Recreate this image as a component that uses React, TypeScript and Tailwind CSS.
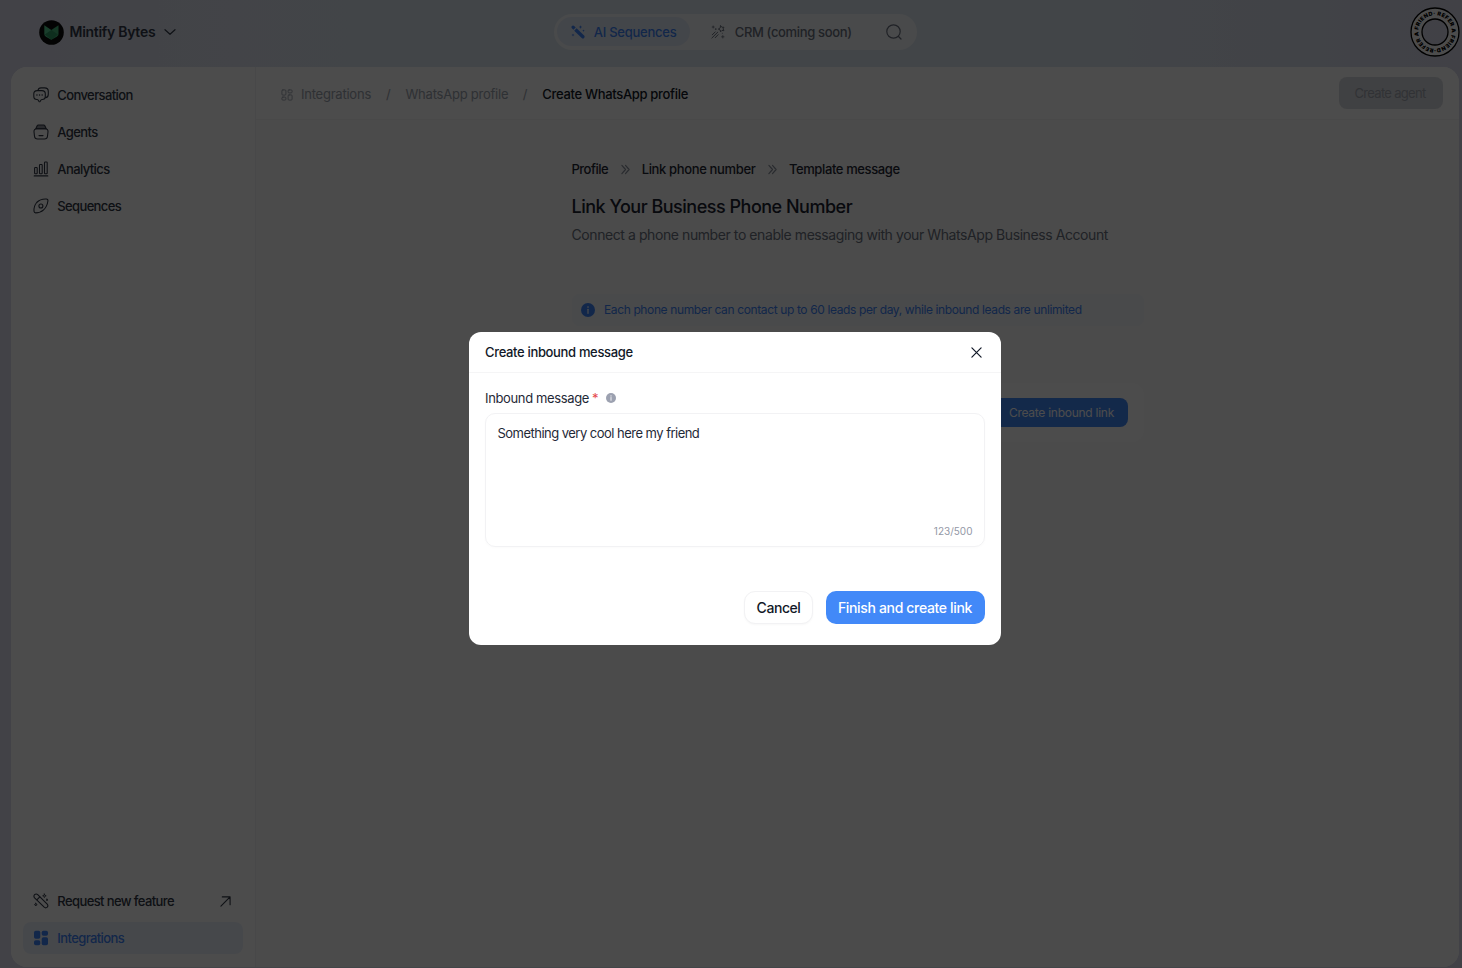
import type { ReactNode } from "react";

type IconProps = { className?: string };

function Svg({ className, box = 16, width = 1.1, children }: IconProps & { box?: number; width?: number; children: ReactNode }) {
  return (
    <svg viewBox={`0 0 ${box} ${box}`} className={className} fill="none" stroke="currentColor" strokeWidth={width} strokeLinecap="round" strokeLinejoin="round">
      {children}
    </svg>
  );
}

const ChatIcon = () => (
  <Svg className="size-4 shrink-0">
    <path d="M5 3.400C5.200 1.700 6.300.9 8 .9h3.600c2.400 0 3.700 1.200 3.700 3.600v2.700c0 2.200-1 3.400-2.900 3.600" />
    <path d="M4.200 3.600h4.700c2.300 0 3.400 1.100 3.400 3.200v2.400c0 2.100-1.100 3.300-3.200 3.300-.5 0-.8.100-1.100.500l-.8 1.300c-.4.500-.9.500-1.300 0L5.100 13c-.3-.4-.6-.5-1.100-.5C1.800 12.500.8 11.400.8 9.200V6.800C.8 4.700 1.900 3.600 4.200 3.600Z" />
    <path d="M3.900 8h.1M6.500 8h.1M9.100 8h.1" strokeWidth="1.400" />
  </Svg>
);

const AgentsIcon = () => (
  <Svg className="size-4 shrink-0">
    <path d="M3.800 4.800h8.400c2 0 3 1.100 2.800 3l-.5 4.400c-.2 1.900-1 2.800-3 2.800h-7c-2 0-2.800-.9-3-2.800L1 7.800c-.2-1.900.800-3 2.800-3Z" />
    <path d="M2.800 4.800 4.300 1.600c.2-.4.500-.6.900-.6h5.600c.4 0 .7.200.9.600l1.500 3.200Z" fill="currentColor" fillOpacity=".55" />
    <path d="M6 11.600h4" />
  </Svg>
);

const AnalyticsIcon = () => (
  <Svg className="size-4 shrink-0">
    <path d="M1.200 14.900h13.600" />
    <rect x="1.600" y="6.500" width="2.600" height="6.300" rx=".7" />
    <rect x="6.500" y="3.500" width="2.700" height="9.300" rx=".7" />
    <rect x="11.500" y="1" width="2.700" height="11.800" rx=".7" />
  </Svg>
);

const SequencesIcon = () => (
  <Svg className="size-4 shrink-0">
    <path d="M1 13.300c-.2-3.400.5-6.400 2.700-8.800C6.100 2 9.700.8 13.400 1c1.200.1 1.700.8 1.500 2-.5 3.500-1.800 6.600-4.300 8.900-2.200 2-4.800 3-8 3C1.600 14.900 1.100 14.300 1 13.300Z" />
    <circle cx="7.900" cy="8" r="2" />
  </Svg>
);

const RequestIcon = () => (
  <Svg className="size-4 shrink-0">
    <path d="M1.600 1.700c.9-.9 2.200-.9 3.100 0l9.500 9.500c.8.900.8 2.100 0 3-.9.800-2.100.800-3 0L1.600 4.800c-.8-.9-.8-2.200 0-3.100Z" />
    <path d="m6.800 3.900-2.700 2.700" />
    <path d="m11.400 1 .5 1.300 1.300.5-1.300.5-.5 1.300-.5-1.300-1.300-.5 1.300-.5ZM14 6.100l.2.600.6.200-.6.200-.2.600-.2-.6-.6-.2.600-.2ZM2.800 10.200l.4 1 1 .4-1 .4-.4 1-.4-1-1-.4 1-.4Z" strokeWidth=".8" />
  </Svg>
);

const GridIcon = () => (
  <svg viewBox="0 0 16 16" className="size-4 shrink-0" fill="currentColor">
    <rect x="1" y=".8" width="6.300" height="8" rx="1.700" />
    <rect x="8.700" y=".8" width="6.300" height="5" rx="1.700" />
    <rect x="1" y="10.200" width="6.300" height="5" rx="1.700" />
    <rect x="8.700" y="7.200" width="6.300" height="8" rx="1.700" />
  </svg>
);

const GridOutlineIcon = () => (
  <Svg className="size-3 shrink-0" box={12} width={0.9}>
    <rect x=".9" y=".9" width="4" height="5.200" rx="1" />
    <rect x="7.100" y=".9" width="4" height="3" rx="1" />
    <rect x=".9" y="8.100" width="4" height="3" rx="1" />
    <rect x="7.100" y="5.900" width="4" height="5.200" rx="1" />
  </Svg>
);

const WandIcon = () => (
  <svg viewBox="0 0 14 14" className="size-3.5 shrink-0" fill="currentColor">
    <path d="M3.200 5.700 5.600 3.300l7.500 7.300c.7.700.7 1.700 0 2.400s-1.700.7-2.400 0Z" />
    <path d="M.9.900c.7-.7 1.700-.7 2.300 0l1.500 1.600-2.300 2.300L.9 3.200C.3 2.600.3 1.600.9.900Z" />
    <path d="m9.500.3.500 1.300 1.300.5-1.300.5-.5 1.300L9 2.600l-1.300-.5L9 1.600ZM12.500 4.400l.4.900.9.400-.9.400-.4.900-.4-.9-.9-.4.900-.4ZM2 8.500l.4 1.100 1.100.4-1.100.4L2 11.500l-.4-1.100L.5 10l1.100-.4Z" />
  </svg>
);

const StarWandIcon = () => (
  <Svg className="size-3.5 shrink-0" box={14} width={1}>
    <path d="m9.700.8 1.200 1.500 2-.1-.8 1.700.8 1.800-1.900-.3L9.600 6.800 9.200 5 7.300 4.100 9 3Z" />
    <path d="M6.700 7.200.9 13M4.200 6.900 1.300 9.800M7.100 9.700l-2.900 3" />
    <path d="M2.200 1v2M1.200 2h2M4.700 3.700v.9M4.300 4.100h.9M11.800 10.600v2.400M10.600 11.800H13M11.300 8.300h.1" strokeWidth=".8" />
  </Svg>
);

function ReferBadge() {
  return (
    <svg viewBox="0 0 50 50" className="size-[50px] shrink-0">
      <defs>
        <path id="badge-ring" d="M25 8.300a16.700 16.700 0 0 1 0 33.400a16.700 16.700 0 0 1 0-33.400" />
      </defs>
      <circle cx="25" cy="25" r="18.700" fill="none" stroke="#fff" strokeWidth="11" />
      <circle cx="25" cy="25" r="24" fill="none" stroke="#000" strokeWidth="1.300" />
      <circle cx="25" cy="25" r="13" fill="none" stroke="#000" strokeWidth="1.300" />
      <text className="font-['Inter'] text-[5.500px] font-black" fill="#000">
        <textPath href="#badge-ring" startOffset="2" textLength="102.500" lengthAdjust="spacing">
          REFER A FRIEND·REFER A FRIEND·
        </textPath>
      </text>
    </svg>
  );
}

function InfoIcon({ className }: IconProps) {
  return (
    <svg viewBox="0 0 14 14" className={className}>
      <circle cx="7" cy="7" r="7" fill="currentColor" />
      <path d="M7 6.300v4" stroke="#fff" strokeWidth="1.200" strokeLinecap="round" />
      <circle cx="7" cy="4.100" r=".8" fill="#fff" />
    </svg>
  );
}

const Chevrons = () => (
  <Svg className="mb-px h-[11px] w-[9px] shrink-0 text-[#8b919d]" box={10} width={1.300}>
    <path d="m1 .5 4 4.500-4 4.500M5 .5 9 5 5 9.500" />
  </Svg>
);

const nav = [
  { label: "Conversation", icon: <ChatIcon />, tracking: "tracking-[-0.600px]" },
  { label: "Agents", icon: <AgentsIcon />, tracking: "tracking-[-0.600px]" },
  { label: "Analytics", icon: <AnalyticsIcon />, tracking: "tracking-[-0.600px]" },
  { label: "Sequences", icon: <SequencesIcon />, tracking: "tracking-[-0.640px]" },
];

function Header() {
  return (
    <header className="flex h-[67px] shrink-0 items-start pl-[39px]">
      <div className="flex h-16 w-[514.700px] items-center">
        <svg viewBox="0 0 25 25" className="size-[25px]">
          <circle cx="12.500" cy="12.500" r="12.300" fill="#0d0d0d" />
          <path d="M5.300 5.300 12.300 10v9.800l-5.300-3.100c-1.100-.7-1.700-1.600-1.700-2.900Z" fill="#58d193" />
          <path d="M19.500 5.300 12.300 10v9.800l5.500-3.100c1.100-.7 1.700-1.600 1.700-2.900Z" fill="#46b77c" />
          <path d="m5.800 14.500 6.500-4.500 6.700 4.500-6.700 5.300Z" fill="#2f9a64" />
        </svg>
        <span className="ml-[5.500px] text-sm font-semibold tracking-[-0.280px] text-[#333b4a]">Mintify Bytes</span>
        <Svg className="ml-[9px] h-3 w-3 text-[#333b4a]" box={12} width={1.200}>
          <path d="m1 3.700 5 4.600 5-4.600" />
        </Svg>
      </div>
      <nav className="mt-3.5 flex h-[35.500px] w-[363px] items-center rounded-full bg-white/70 pl-[3px] text-[13px] font-medium text-[#6b7280]">
        <div className="flex h-[29px] w-[133px] items-center rounded-full bg-[#e2eaf7] pl-3.5 text-[#3f84f7]">
          <WandIcon />
          <span className="ml-[9px] pt-px whitespace-nowrap tracking-[-0.240px]">AI Sequences</span>
        </div>
        <div className="ml-[21px] flex items-center">
          <StarWandIcon />
          <span className="ml-[10px] pt-px whitespace-nowrap tracking-[-0.340px]">CRM (coming soon)</span>
        </div>
        <Svg className="ml-[34px] size-4" width={1.200}>
          <circle cx="7.500" cy="7.500" r="6.700" />
          <path d="m12.500 12.500 2.500 2.500" />
        </Svg>
      </nav>
      <div className="flex flex-1 justify-end pt-[7px] pr-0.5">
        <ReferBadge />
      </div>
    </header>
  );
}

function Sidebar() {
  return (
    <aside className="flex w-[245px] shrink-0 flex-col justify-between border-r border-[#f2f2f4] bg-white px-3 pt-3 pb-[13px] text-[13px] font-medium text-[#303745]">
      <ul className="flex flex-col gap-[5px]">
        {nav.map((item) => (
          <li key={item.label} className="flex h-8 items-center gap-[8.300px] pl-2.5">
            {item.icon}
            <span className={`pt-0.5 ${item.tracking}`}>{item.label}</span>
          </li>
        ))}
      </ul>
      <ul className="flex flex-col gap-[5px]">
        <li className="flex h-8 items-center gap-[8.300px] pr-3 pl-2.5">
          <RequestIcon />
          <span className="flex-1 pt-0.5 tracking-[-0.600px]">Request new feature</span>
          <Svg className="size-[11px]" box={12} width={1.200}>
            <path d="M1 11 11 1M2.500 1H11v8.500" />
          </Svg>
        </li>
        <li className="flex h-8 items-center gap-[8.300px] rounded-lg bg-[#ecf1fb] pl-2.5 text-[#3f84f7]">
          <GridIcon />
          <span className="pt-0.5 tracking-[-0.600px]">Integrations</span>
        </li>
      </ul>
    </aside>
  );
}

function Toolbar() {
  return (
    <div className="flex h-[53px] items-center justify-between border-b border-[#f4f4f6] bg-[#fdfdfd] pr-4 pl-[25px] text-[13px] text-[#9ca3af]">
      <div className="flex items-center pt-[3px]">
        <GridOutlineIcon />
        <span className="ml-2 tracking-[-0.230px]">Integrations</span>
        <span className="ml-[15px] w-[19.500px]">/</span>
        <span className="tracking-[-0.230px]">WhatsApp profile</span>
        <span className="ml-[14.500px] w-[19.500px]">/</span>
        <span className="font-medium tracking-[-0.320px] text-[#111827]">Create WhatsApp profile</span>
      </div>
      <button className="h-8 w-[104px] rounded-lg bg-[#d8dadf] pt-0.5 pr-0.5 tracking-[-0.700px] text-[#a4a9b3]">Create agent</button>
    </div>
  );
}

function Content() {
  return (
    <div className="ml-[315.500px] w-[572px] pt-[40px]">
      <div className="flex h-5 items-center text-[13px] font-medium text-[#1f2634]">
        <span className="tracking-[-0.500px]">Profile</span>
        <span className="mr-3 ml-[12.500px] flex"><Chevrons /></span>
        <span className="tracking-[-0.350px]">Link phone number</span>
        <span className="mr-3 ml-[12.500px] flex"><Chevrons /></span>
        <span className="tracking-[-0.390px]">Template message</span>
      </div>
      <h1 className="mt-[13px] text-lg leading-7 font-[450] tracking-[-0.490px] text-[#1c2331]">Link Your Business Phone Number</h1>
      <p className="mt-1 text-sm leading-5 tracking-[-0.420px] whitespace-nowrap text-[#6b7280]">
        Connect a phone number to enable messaging with your WhatsApp Business Account
      </p>
      <div className="mt-[49px] flex h-8 items-center rounded-lg bg-[#f4f7fc] pl-[9px] text-xs text-[#3f84f7]">
        <InfoIcon className="size-3.5" />
        <span className="ml-[9.500px] tracking-[-0.377px] whitespace-nowrap">
          Each phone number can contact up to 60 leads per day, while inbound leads are unlimited
        </span>
      </div>
      <div className="mt-[57px] flex h-[59px] items-center justify-end rounded-xl bg-white pr-4">
        <button className="flex h-[29px] items-center gap-2 rounded-lg bg-[#4289f8] pr-[13.500px] pl-2.5 text-xs tracking-[-0.260px] text-white">
          <Svg className="size-3.5" box={14}>
            <path d="M7 2v10M2 7h10" />
          </Svg>
          Create inbound link
        </button>
      </div>
    </div>
  );
}

function InboundDialog() {
  return (
    <section role="dialog" aria-modal="true" className="mt-[331.500px] ml-[469px] h-[313px] w-[532px] rounded-xl bg-white">
      <div className="flex h-[41px] items-center justify-between border-b border-[#f5f5f6] pr-[19px] pl-4">
        <h2 className="pt-0.5 text-[13px] font-medium tracking-[-0.340px] text-[#111827]">Create inbound message</h2>
        <Svg className="mt-px size-[11px] text-[#111827]" box={11} width={1.200}>
          <path d="m.9.900 9.200 9.200M10.100.9.900 10.100" />
        </Svg>
      </div>
      <div className="px-4 pt-[15.500px]">
        <div className="flex h-5 items-center text-[13px]">
          <span className="pt-px tracking-[-0.360px] text-[#1f2937]">Inbound message</span>
          <span className="ml-[3px] pt-0.5 text-[#e5484d]">*</span>
          <InfoIcon className="ml-[7px] size-2.5 text-[#9ca1b0]" />
        </div>
        <div className="mt-[5px] flex h-[133.500px] flex-col justify-between rounded-[10px] border border-[#f2f2f4] px-[11.500px] pt-[8.500px] pb-[7px] shadow-[0_1px_3px_rgba(0,0,0,0.02)]">
          <p className="text-[13px] leading-5 tracking-[-0.525px] text-[#1f2937]">Something very cool here my friend</p>
          <span className="self-end text-[10px] leading-4 text-[#9398a6]">123/500</span>
        </div>
        <div className="mt-[44.500px] flex justify-end gap-[13px] text-sm font-[450]">
          <button className="h-[33px] w-[69px] rounded-[11px] border border-[#f2f2f4] bg-white tracking-[-0.440px] text-[#111827] shadow-[0_1px_2px_rgba(0,0,0,0.03)]">Cancel</button>
          <button className="h-[33px] w-[159px] rounded-[10px] bg-[#4289f8] pr-px tracking-[-0.340px] whitespace-nowrap text-white">Finish and create link</button>
        </div>
      </div>
    </section>
  );
}

export default function App() {
  return (
    <div className="relative h-[968px] w-[1462px] overflow-hidden font-['Inter',sans-serif]">
      <div className="flex h-full flex-col bg-[linear-gradient(90deg,#dcdced,#dfe5f0_16%,#dce8f1_40%,#dde7f1_75%,#d9daec)]">
        <Header />
        <div className="mr-[3px] mb-px ml-[11px] flex flex-1 overflow-hidden rounded-2xl bg-white">
          <Sidebar />
          <main className="flex-1 bg-[#fafafa]">
            <Toolbar />
            <Content />
          </main>
        </div>
      </div>
      <div className="absolute inset-0 bg-black/70">
        <InboundDialog />
      </div>
    </div>
  );
}
